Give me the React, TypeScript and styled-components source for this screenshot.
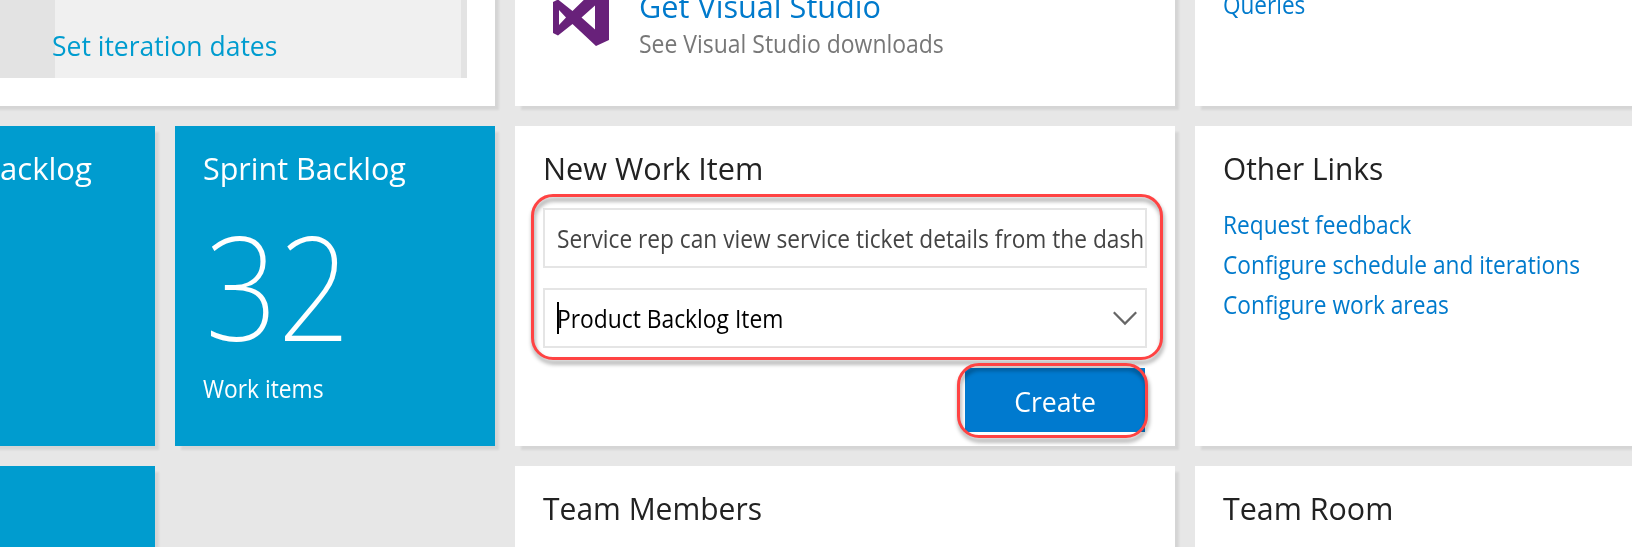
import React from 'react';
import styled, { createGlobalStyle } from 'styled-components';

const GlobalStyle = createGlobalStyle`
  * { box-sizing: border-box; }
  body {
    margin: 0;
    background: #e7e7e7;
    font-family: "Open Sans", "Noto Sans", sans-serif;
  }
`;

const Viewport = styled.main`
  width: 1632px;
  height: 547px;
  overflow: hidden;
  background: #e7e7e7;
`;

const Board = styled.div`
  display: grid;
  grid-template-columns: 155px 320px 660px 457px;
  grid-template-rows: 136px 320px 120px;
  gap: 20px;
  margin-top: -30px;
`;

const Card = styled.section`
  position: relative;
  padding: 22px 28px 0;
  background: #fff;
  box-shadow: 5px 5px 2px -1px rgba(0, 0, 0, 0.075);
`;

/* Clipped tiles run past the left edge of the viewport. */
const Tile = styled(Card)<{ $clipped?: boolean }>`
  margin-left: ${p => (p.$clipped ? -10 : 0)}px;
  padding-left: ${p => (p.$clipped ? 10 : 28)}px;
  background: #009ccf;
  color: #fff;
`;

const Condensed = styled.span<{ $k: number }>`
  display: inline-block;
  white-space: nowrap;
  transform: scaleX(${p => p.$k});
  transform-origin: 0 50%;
`;

const Heading = styled.h2`
  margin: 0;
  font-size: 31px;
  line-height: 40px;
  font-weight: 400;
  color: #222;
  ${Tile} & { color: #fff; }
`;

const SprintPanel = styled.div`
  width: 467px;
  height: 108px;
  padding: 55px 0 0 55px;
  background: linear-gradient(to right, #e3e3e3 55px, #f0f0f0 55px, #f0f0f0 461px, #e3e3e3 461px);
`;

const SprintCard = styled(Card)`
  grid-column: span 2;
  margin-left: -10px;
  padding: 0 0 0 10px;
`;

const DatesLink = styled.a`
  display: block;
  margin-left: -3px;
  font-size: 28px;
  line-height: 40px;
  color: #009ccf;
`;

const DownloadCard = styled(Card)`
  display: flex;
  gap: 30px;
  padding: 15px 0 0 38px;
`;

const DownloadText = styled.div`
  padding-top: 1px;
`;

const DownloadTitle = styled.a`
  display: block;
  font-size: 31px;
  line-height: 40px;
  color: #007acc;
`;

const DownloadNote = styled.div`
  font-size: 25px;
  line-height: 34px;
  color: #777;
`;

const Logo = styled.svg`
  display: block;
  width: 56px;
  height: 62px;
`;

const LinkList = styled.nav<{ $top: number }>`
  display: flex;
  flex-direction: column;
  margin-top: ${p => p.$top}px;
`;

const TextLink = styled.a`
  font-size: 25px;
  line-height: 40px;
  color: #007acc;
`;

const Count = styled.div`
  margin: 45px 0 34px 2px;
  font: 250 145px/104px "Noto Sans", sans-serif;
`;

const CountLabel = styled.div`
  font-size: 25px;
  line-height: 34px;
`;

const Form = styled.form`
  display: flex;
  flex-direction: column;
  gap: 20px;
  width: 604px;
  margin-top: 20px;
`;

const Fields = styled.div`
  position: relative;
  display: flex;
  flex-direction: column;
  gap: 20px;
`;

const Field = styled.div<{ $color: string }>`
  display: flex;
  align-items: center;
  height: 60px;
  padding: 0 8px 0 12px;
  border: 2px solid #e5e5e5;
  background: #fff;
  font-size: 25px;
  line-height: 56px;
  color: ${p => p.$color};
  white-space: nowrap;
`;

const Caret = styled.i`
  width: 2px;
  height: 32px;
  margin-right: -2px;
  background: #000;
`;

const Chevron = styled.svg`
  width: 24px;
  height: 15px;
  margin-left: auto;
`;

const Actions = styled.div`
  display: flex;
  justify-content: flex-end;
  padding-right: 2px;
`;

const ActionSlot = styled.div`
  position: relative;
`;

const CreateButton = styled.button`
  display: block;
  width: 180px;
  height: 64px;
  padding: 2px 0 0;
  border: 0;
  background: #007acf;
  color: #fff;
  font: 400 28px/62px "Open Sans", sans-serif;

  ${Condensed} { transform-origin: 50% 50%; }
`;

const Highlight = styled.div<{ $inset: string }>`
  position: absolute;
  inset: ${p => p.$inset};
  border: 3px solid #ff4343;
  border-radius: 22px;
  filter: drop-shadow(1px 4px 2px rgba(0, 0, 0, 0.42));
  pointer-events: none;
`;

const EmptyCell = styled.div``;

const quickLinks = ['Request feedback', 'Configure schedule and iterations', 'Configure work areas'];

export default function App() {
  return (
    <Viewport>
      <GlobalStyle />
      <Board>
        <SprintCard>
          <SprintPanel>
            <DatesLink><Condensed $k={0.946}>Set iteration dates</Condensed></DatesLink>
          </SprintPanel>
        </SprintCard>

        <DownloadCard>
          <Logo viewBox="0 0 56 62">
            <path
              fill="#68217a"
              fillRule="evenodd"
              d="M0 17L5 14.5L19.5 26L43 3L56 9V55L43 61L19.5 39L5 50.5L0 48ZM6 25V40L13 32.5ZM42 20.5L28.5 32.5L42 44.5Z"
            />
          </Logo>
          <DownloadText>
            <DownloadTitle><Condensed $k={0.989}>Get Visual Studio</Condensed></DownloadTitle>
            <DownloadNote><Condensed $k={0.918}>See Visual Studio downloads</Condensed></DownloadNote>
          </DownloadText>
        </DownloadCard>

        <Card>
          <LinkList $top={-8}>
            <TextLink><Condensed $k={0.902}>Queries</Condensed></TextLink>
          </LinkList>
        </Card>

        <Tile $clipped>
          <Heading><Condensed $k={1.003}>acklog</Condensed></Heading>
        </Tile>

        <Tile>
          <Heading><Condensed $k={0.983}>Sprint Backlog</Condensed></Heading>
          <Count><Condensed $k={0.88}>32</Condensed></Count>
          <CountLabel><Condensed $k={0.911}>Work items</Condensed></CountLabel>
        </Tile>

        <Card>
          <Heading><Condensed $k={0.988}>New Work Item</Condensed></Heading>
          <Form>
            <Fields>
              <Field $color="#444">
                <Condensed $k={0.908}>Service rep can view service ticket details from the dash</Condensed>
              </Field>
              <Field $color="#000">
                <Caret />
                <Condensed $k={0.913}>Product Backlog Item</Condensed>
                <Chevron viewBox="0 0 24 15" fill="none" stroke="#666" strokeWidth="2.2">
                  <path d="M0.8 1.2L12 12.6L23.2 1.2" />
                </Chevron>
              </Field>
              <Highlight $inset="-14px -16px -12px -12px" />
            </Fields>
            <Actions>
              <ActionSlot>
                <CreateButton type="button"><Condensed $k={0.949}>Create</Condensed></CreateButton>
                <Highlight $inset="-5px -3px -6px -8px" />
              </ActionSlot>
            </Actions>
          </Form>
        </Card>

        <Card>
          <Heading><Condensed $k={0.963}>Other Links</Condensed></Heading>
          <LinkList $top={16}>
            {quickLinks.map(label => (
              <TextLink key={label}><Condensed $k={0.908}>{label}</Condensed></TextLink>
            ))}
          </LinkList>
        </Card>

        <Tile $clipped />
        <EmptyCell />
        <Card>
          <Heading><Condensed $k={0.968}>Team Members</Condensed></Heading>
        </Card>
        <Card>
          <Heading><Condensed $k={0.981}>Team Room</Condensed></Heading>
        </Card>
      </Board>
    </Viewport>
  );
}
